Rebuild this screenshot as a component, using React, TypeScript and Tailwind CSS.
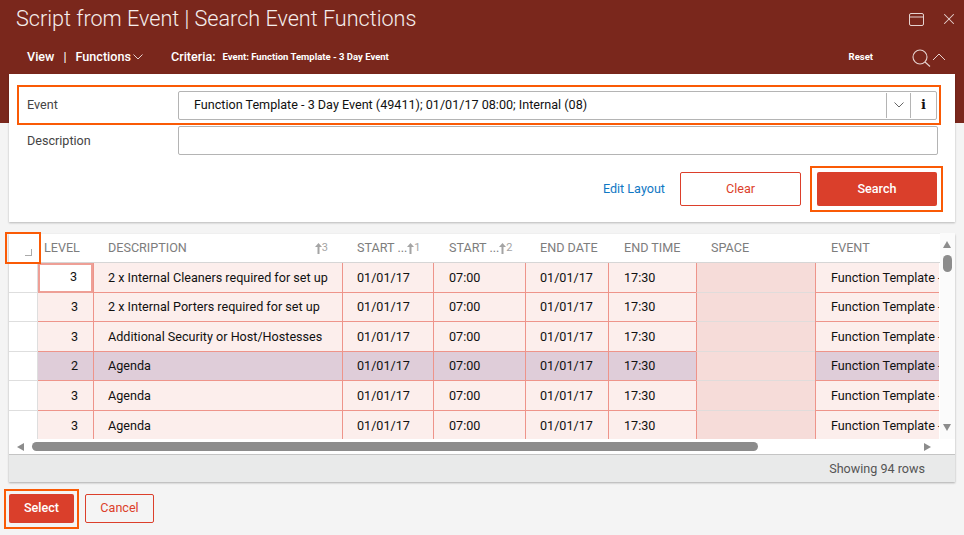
import { X } from "lucide-react";

const rows = [
	{ level: "3", description: "2 x Internal Cleaners required for set up" },
	{ level: "3", description: "2 x Internal Porters required for set up" },
	{ level: "3", description: "Additional Security or Host/Hostesses" },
	{ level: "2", description: "Agenda", parent: true },
	{ level: "3", description: "Agenda" },
	{ level: "3", description: "Agenda" },
];

const columns = "grid grid-cols-[29px_55px_249px_91px_92px_83px_88px_119px_124px]";

function Chevron({ up, className }: { up?: boolean; className?: string }) {
	return (
		<svg width="10" height="6" viewBox="0 0 10 6" fill="none" stroke="currentColor" strokeWidth="1" className={className}>
			<path d={up ? "M0.5 5.5 L5 1 L9.5 5.5" : "M0.5 0.5 L5 5 L9.5 0.5"} />
		</svg>
	);
}

function HeadCell({ label, sort, pl = "pl-[15px]", pr = "pr-[14px]" }: { label: string; sort?: string; pl?: string; pr?: string }) {
	return (
		<div className={`flex items-center justify-between ${pl} ${pr} whitespace-nowrap overflow-hidden`}>
			<span>{label}</span>
			{sort && (
				<span className="flex items-center text-[11px] text-[#a4a4a4]">
					<svg width="7" height="11" viewBox="0 0 7 11" className="fill-[#a4a4a4]">
						<path d="M3.5 0 L7 4 H4.5 V11 H2.5 V4 H0 Z" />
					</svg>
					{sort}
				</span>
			)}
		</div>
	);
}

function Row({ row, index }: { row: (typeof rows)[number]; index: number }) {
	const last = index === rows.length - 1;
	const line = last ? "" : "border-b border-b-[#ee948a]";
	const bg = row.parent ? "bg-[#dfcdd9]" : "bg-[#fceeec]";
	const base = `flex items-center pt-[1.5px] border-l border-l-[#ee948a] whitespace-nowrap overflow-hidden ${line} ${bg}`;
	const cell = `${base} pl-[14px]`;
	const wide = `${base} pl-[15px]`;
	return (
		<div className={`${columns} ${last ? "h-[28.5px]" : "h-[29.6px]"}`}>
			<div className={`border-r border-r-[#dedede] bg-white ${last ? "" : "border-b border-b-[#dedede]"}`} />
			{index === 0 ? (
				<div className="flex items-center justify-end pr-[14px] bg-white border-2 border-[#ee9f96]">{row.level}</div>
			) : (
				<div className={`flex items-center justify-end pt-[1.5px] pr-[15px] ${line} ${bg}`}>{row.level}</div>
			)}
			<div className={cell}>{row.description}</div>
			<div className={cell}>01/01/17</div>
			<div className={wide}>07:00</div>
			<div className={cell}>01/01/17</div>
			<div className={wide}>17:30</div>
			<div className={`border-l border-l-[#ee948a] bg-[#f6dcd9] ${last ? "" : "border-b border-b-[#e0dcdb]"}`} />
			<div className={wide}>Function Template - 3 Day</div>
		</div>
	);
}

export default function App() {
	return (
		<div className="w-[964px] h-[535px] overflow-hidden bg-[#f4f4f4] font-['Roboto',sans-serif] text-[12.6px] text-[#111]">
			<div className="h-[123px] bg-[#7a271c] text-white">
				<div className="flex items-center justify-between h-[38px] pl-4 pr-[6px]">
					<h1 className="text-[21.6px] font-light text-[#f5eeec]">Script from Event | Search Event Functions</h1>
					<div className="flex items-center gap-4 text-[#e6d3d0]">
						<svg width="15" height="13" viewBox="0 0 15 13" fill="none" stroke="currentColor" strokeWidth="1">
							<rect x="0.5" y="0.5" width="14" height="12" rx="1.5" />
							<path d="M0.5 4 H14.5" />
						</svg>
						<X size={18} strokeWidth={1.4} />
					</div>
				</div>
				<div className="flex items-center h-[38px] pl-[27px] pr-[18px]">
					<span className="font-medium">View</span>
					<span className="ml-[9px] font-normal">|</span>
					<span className="ml-[9px] font-medium">Functions</span>
					<Chevron className="ml-[2px] text-[#e6d3d0]" />
					<span className="ml-[28px] font-medium">Criteria:</span>
					<span className="ml-[7px] text-[9.5px] font-bold">Event: Function Template - 3 Day Event</span>
					<span className="ml-auto text-[9.5px] font-bold">Reset</span>
					<svg width="19" height="18" viewBox="0 0 19 18" fill="none" stroke="#e6d3d0" strokeWidth="1.1" className="ml-[39px] mt-[1px]">
						<circle cx="8" cy="8" r="7" />
						<path d="M13 13 L18 17.5" />
					</svg>
					<svg width="14" height="8" viewBox="0 0 14 8" fill="none" stroke="#e6d3d0" strokeWidth="1" className="ml-px -mt-[1px]">
						<path d="M1 7 L7 1 L13 7" />
					</svg>
				</div>
			</div>

			<div className="mx-[9px] -mt-[49px] h-[148px] bg-white shadow-[0_1px_2px_rgba(0,0,0,0.25)] px-2 pt-[11px] relative">
				<div className="flex items-center h-[40px] w-[924px] border-2 border-[#fa5a05] pl-2 pr-[2px]">
					<span className="w-[151px] text-[#444]">Event</span>
					<div className="flex items-center flex-1 h-[29px] border border-[#b4b4b4] rounded-[2px] pl-[15px]">
						<span className="flex-1">Function Template - 3 Day Event (49411); 01/01/17 08:00; Internal (08)</span>
						<div className="flex items-center justify-center w-6 h-[25px] border-l border-[#b4b4b4]">
							<Chevron className="text-[#666]" />
						</div>
						<div className="flex items-center justify-center w-[26px] h-[25px] border-l border-[#b4b4b4] font-['DejaVu_Serif',serif] font-bold text-[13px]">i</div>
					</div>
				</div>
				<div className="flex items-center h-[29px] mt-[1px] pl-[10px] pr-[9px]">
					<span className="w-[151px] pt-px text-[#444]">Description</span>
					<div className="flex-1 h-[29px] border border-[#b4b4b4] rounded-[2px]" />
				</div>
				<div className="flex items-center justify-end mt-[11px] w-[926px]">
					<a className="text-[#1078c4] mr-[15px]">Edit Layout</a>
					<button className="w-[121px] h-[34px] border border-[#dc3f2b] rounded-[2px] text-[#dc3f2b] mr-[9px]">Clear</button>
					<div className="border-2 border-[#fa5a05] py-1 pl-[5px] pr-1">
						<button className="block w-[120px] h-[34px] bg-[#da3f2b] rounded-[2px] text-white font-medium">Search</button>
					</div>
				</div>
			</div>

			<div className="relative mx-[9px] mt-3 h-[248px] bg-white shadow-[0_1px_2px_rgba(0,0,0,0.3)]">
				<div className={`${columns} h-[29px] border-b border-[#d6d6d6] text-[#7d7d7d]`}>
					<div className="relative">
						<div className="absolute right-[6px] bottom-[6px] w-[7px] h-[7px] border-r border-b border-[#aaa]" />
					</div>
					<div className="flex items-center pl-[6px]">LEVEL</div>
					<HeadCell label="DESCRIPTION" sort="3" />
					<HeadCell label="START ..." sort="1" pr="pr-[15px]" />
					<HeadCell label="START ..." sort="2" pl="pl-[16px]" />
					<HeadCell label="END DATE" />
					<HeadCell label="END TIME" pl="pl-[16px]" />
					<HeadCell label="SPACE" />
					<HeadCell label="EVENT" pl="pl-[16px]" />
				</div>
				{rows.map((row, i) => (
					<Row key={i} row={row} index={i} />
				))}
				<div className="flex items-center h-[15px] pl-[8px] pr-[10px] w-[932px]">
					<span className="w-0 h-0 border-y-[4.5px] border-y-transparent border-r-[7px] border-r-[#8c8c8c]" />
					<div className="ml-[8px] w-[726px] h-[9px] rounded-full bg-[#8c8c8c]" />
					<span className="ml-auto w-0 h-0 border-y-[4.5px] border-y-transparent border-l-[7px] border-l-[#8c8c8c]" />
				</div>
				<div className="flex items-center justify-end h-[28px] bg-[#e9eaea] border-t border-[#c4c4c4] pr-[30px] text-[#555]">Showing 94 rows</div>

				{/* vertical scrollbar sits over the table's right edge */}
				<div className="absolute right-0 top-[-1px] w-[15px] h-[206px] bg-[#fbfbfb] flex flex-col items-start pl-[3px] pt-[8px]">
					<span className="w-0 h-0 border-x-[4.5px] border-x-transparent border-b-[7px] border-b-[#8c8c8c]" />
					<div className="mt-[7px] w-[9px] h-[17px] rounded-full bg-[#8c8c8c]" />
					<span className="mt-auto mb-[8px] w-0 h-0 border-x-[4.5px] border-x-transparent border-t-[7px] border-t-[#8c8c8c]" />
				</div>
				{/* highlight around the select-all cell */}
				<div className="absolute left-[-4px] top-[-2px] w-[36px] h-[32px] border-2 border-[#fa5a05]" />
			</div>

			<div className="flex items-start ml-[4px] mt-[7px]">
				<div className="border-2 border-[#fa5a05] pl-[3px] pr-[3px] pt-[3px] pb-[4px]">
					<button className="block w-[65px] h-[29px] bg-[#da3f2b] rounded-[2px] text-white font-medium">Select</button>
				</div>
				<button className="ml-[6px] mt-[5px] w-[69px] h-[29px] border border-[#dc3f2b] rounded-[2px] text-[#dc3f2b]">Cancel</button>
			</div>
		</div>
	);
}
